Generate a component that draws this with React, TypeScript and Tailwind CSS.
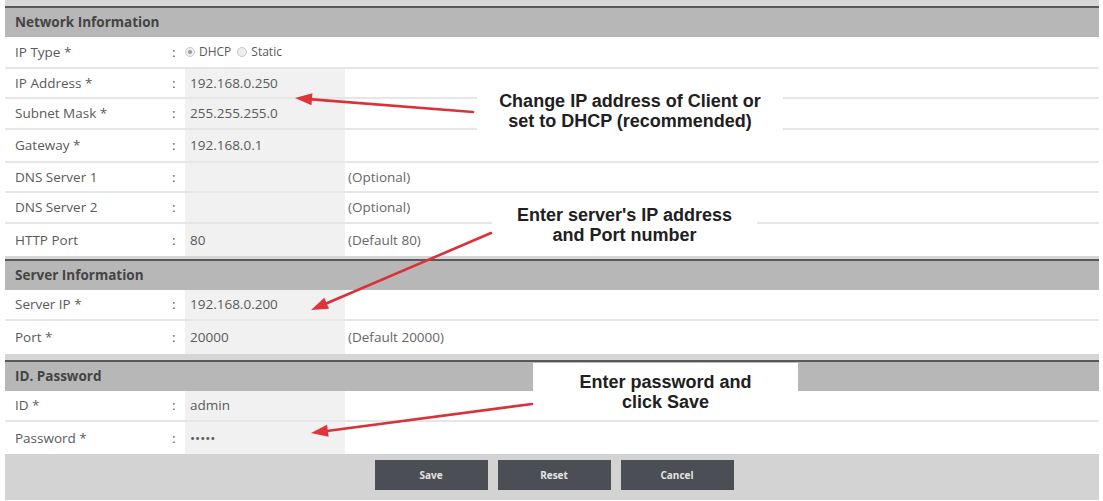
import React from 'react'

type Row = {
  label: string
  value?: string
  note?: string
  h: number
  radio?: boolean
}

const networkRows: Row[] = [
  { label: 'IP Type *', h: 32, radio: true },
  { label: 'IP Address *', value: '192.168.0.250', h: 30 },
  { label: 'Subnet Mask *', value: '255.255.255.0', h: 31 },
  { label: 'Gateway *', value: '192.168.0.1', h: 33 },
  { label: 'DNS Server 1', value: '', note: '(Optional)', h: 30 },
  { label: 'DNS Server 2', value: '', note: '(Optional)', h: 31 },
  { label: 'HTTP Port', value: '80', note: '(Default 80)', h: 32 },
]

const serverRows: Row[] = [
  { label: 'Server IP *', value: '192.168.0.200', h: 31 },
  { label: 'Port *', value: '20000', note: '(Default 20000)', h: 33 },
]

const idRows: Row[] = [
  { label: 'ID *', value: 'admin', h: 31 },
  { label: 'Password *', value: '•••••', h: 32 },
]

function SectionHeader({ title, strip }: { title: string; strip: string }) {
  return (
    <div>
      <div className={`${strip} bg-[#d6d6d6]`} />
      <div className="h-[2px] bg-[#595959]" />
      <div className="flex h-[29px] items-center bg-[#b7b7b7] pl-[10px] text-[13.5px] font-bold text-[#444]">
        {title}
      </div>
    </div>
  )
}

function FormRow({ row, last }: { row: Row; last?: boolean }) {
  return (
    <div
      className={`flex items-stretch text-[13.5px] text-[#5a5a5a] ${last ? '' : 'border-b-2 border-[#e6e6e6]'}`}
      style={{ height: row.h }}
    >
      <div className="flex w-[163px] items-center pl-[10px]">{row.label}</div>
      <div className="flex w-[17px] items-center pl-[4px]">:</div>
      {row.radio ? (
        <div className="flex items-center gap-[4px] text-[12px]">
          <span className="flex h-[10px] w-[10px] items-center justify-center rounded-full border border-[#c8c8c8] bg-[#eee]">
            <span className="h-[4px] w-[4px] rounded-full bg-[#999]" />
          </span>
          <span>DHCP</span>
          <span className="ml-[2px] h-[10px] w-[10px] rounded-full border border-[#c8c8c8] bg-[#eee]" />
          <span>Static</span>
        </div>
      ) : (
        <div className="flex w-[160px] items-center bg-[#f1f1f1] pl-[5px]">{row.value}</div>
      )}
      {row.note && <div className="flex items-center pl-[3px] text-[#666]">{row.note}</div>}
    </div>
  )
}

function Arrow({ x1, y1, x2, y2 }: { x1: number; y1: number; x2: number; y2: number }) {
  const dx = x2 - x1
  const dy = y2 - y1
  const len = Math.hypot(dx, dy)
  const ux = dx / len
  const uy = dy / len
  const bx = x2 - ux * 17
  const by = y2 - uy * 17
  const nx = -uy * 6
  const ny = ux * 6
  return (
    <g>
      <line x1={x1} y1={y1} x2={bx + ux * 3} y2={by + uy * 3} stroke="#d8323a" strokeWidth={2.6} strokeLinecap="round" />
      <polygon
        points={`${x2},${y2} ${bx + nx},${by + ny} ${bx - nx},${by - ny}`}
        fill="#e0333b"
      />
    </g>
  )
}

function Note({ className, lines }: { className: string; lines: string[] }) {
  return (
    <div
      className={`absolute flex flex-col items-center justify-center bg-white text-[18px] leading-[20px] font-bold text-[#202020] ${className}`}
      style={{ fontFamily: '"Liberation Sans", Arial, sans-serif' }}
    >
      {lines.map(l => (
        <span key={l}>{l}</span>
      ))}
    </div>
  )
}

export default function App() {
  return (
    <div
      className="relative h-[501px] w-[1103px] overflow-hidden bg-white"
      style={{ fontFamily: '"Open Sans", "Noto Sans", sans-serif' }}
    >
      <div className="ml-[5px] w-[1094px]">
        <SectionHeader title="Network Information" strip="h-[6px]" />
        {networkRows.map((r, i) => (
          <FormRow key={r.label} row={r} last={i === networkRows.length - 1} />
        ))}
        <SectionHeader title="Server Information" strip="h-[3px]" />
        {serverRows.map((r, i) => (
          <FormRow key={r.label} row={r} last={i === serverRows.length - 1} />
        ))}
        <SectionHeader title="ID. Password" strip="h-[6px]" />
        {idRows.map((r, i) => (
          <FormRow key={r.label} row={r} last={i === idRows.length - 1} />
        ))}
        <div className="flex h-[46px] justify-center gap-[10px] bg-[#d3d3d3] pt-[6px] pl-[4px]">
          {['Save', 'Reset', 'Cancel'].map(b => (
            <button
              key={b}
              className="h-[30px] w-[113px] bg-[#4b4e55] text-[10px] font-bold text-[#e4e4e4]"
            >
              {b}
            </button>
          ))}
        </div>
      </div>

      <Note className="left-[477px] top-[74px] h-[84px] w-[306px] pb-[10px]" lines={['Change IP address of Client or', 'set to DHCP (recommended)']} />
      <Note className="left-[492px] top-[197px] h-[56px] w-[265px]" lines={["Enter server's IP address", 'and Port number']} />
      <Note className="left-[533px] top-[363px] h-[57px] w-[265px]" lines={['Enter password and', 'click Save']} />

      <svg className="pointer-events-none absolute inset-0" width={1103} height={501}>
        <Arrow x1={473} y1={112} x2={295} y2={98} />
        <Arrow x1={491} y1={233} x2={311} y2={310} />
        <Arrow x1={532} y1={404} x2={311} y2={433} />
      </svg>
    </div>
  )
}
